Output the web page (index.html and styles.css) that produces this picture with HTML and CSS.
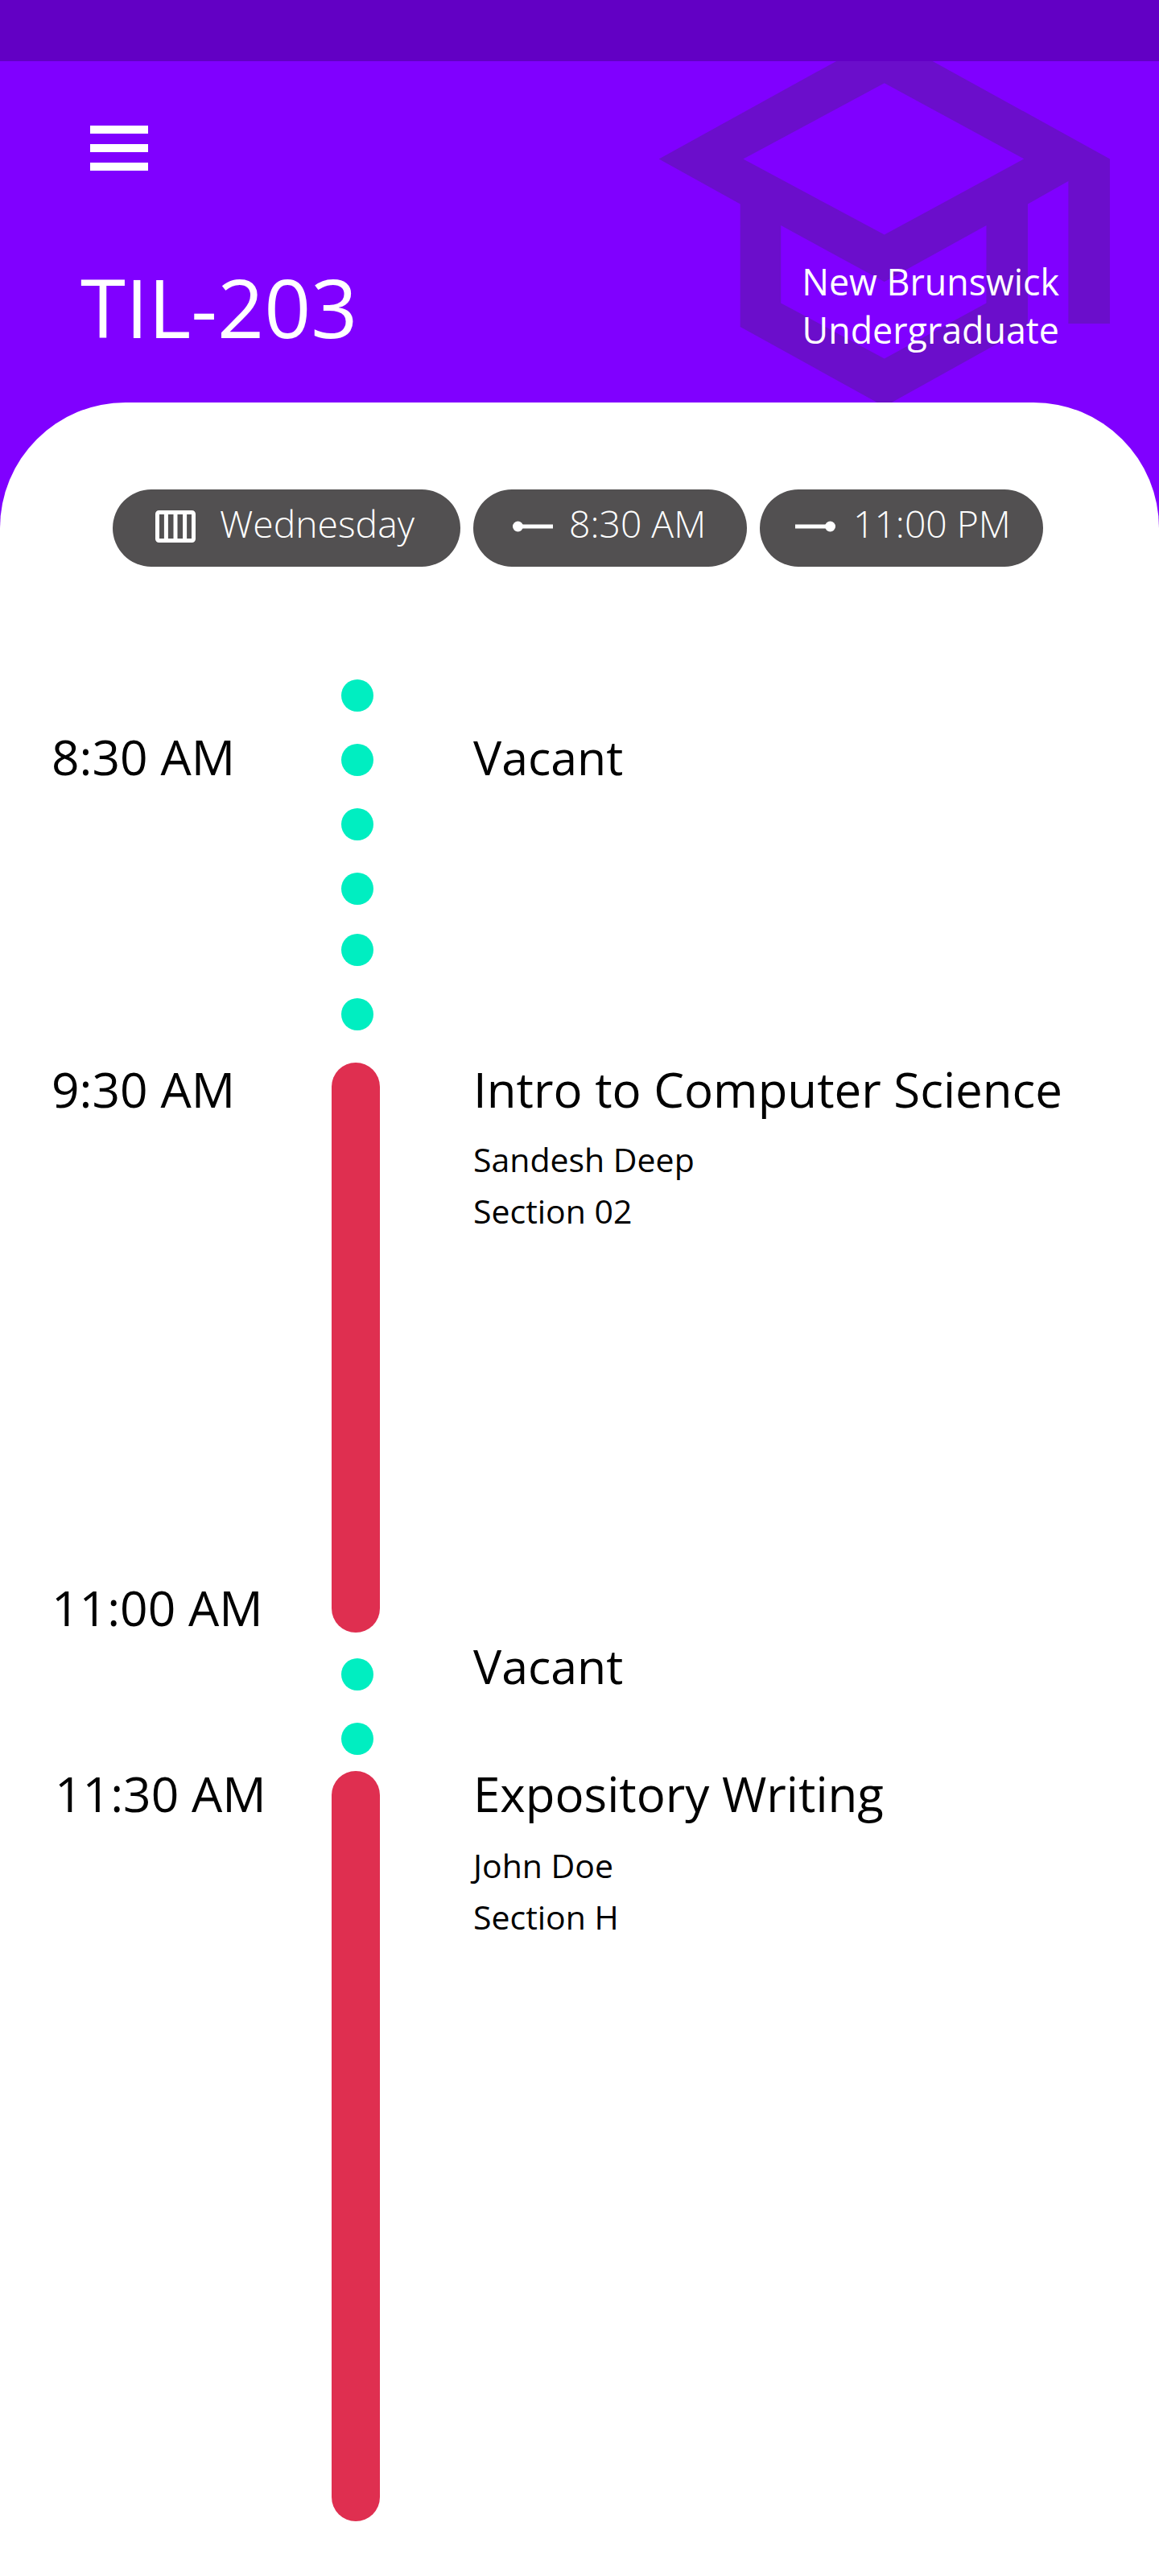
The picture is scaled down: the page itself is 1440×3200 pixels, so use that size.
FILE: index.html
```html
<!DOCTYPE html>
<html lang="en">
<head>
    <meta charset="UTF-8">
    <meta name="viewport" content="width=device-width, initial-scale=1.0">
    <title>TIL-203</title>
    <link rel="stylesheet" href="styles.css">
</head>
<body>
    <div class="page">
        <header class="header">
            <svg class="cap" viewBox="0 0 600 520" aria-hidden="true">
                <path fill-rule="evenodd" d="M18.7 197.4 L298.8 43 L579 197.4 V402 H527.4 V225 L477 253.4 V406 L298.8 505 L119.7 406 V253.4 Z M298.8 103.3 L123.4 197.4 L298.8 291.6 L472.3 197.4 Z M170.2 280 V376.5 L298.8 445.4 L425.5 376.5 V280 L298.8 350 Z"/>
            </svg>
            <div class="status-bar"></div>
            <div class="menu">
                <span></span>
                <span></span>
                <span></span>
            </div>
            <div class="title-row">
                <h1 class="room">TIL-203</h1>
                <p class="campus">New Brunswick<br>Undergraduate</p>
            </div>
        </header>

        <main class="sheet">
            <div class="pills">
                <div class="pill pill-day">
                    <svg class="icon-day" viewBox="0 0 50 40" aria-hidden="true">
                        <rect x="2.5" y="2.5" width="45" height="35" rx="2"/>
                        <path d="M13.4 3V37M25 3V37M36.6 3V37"/>
                    </svg>
                    <span>Wednesday</span>
                </div>
                <div class="pill pill-start">
                    <svg class="icon-range" viewBox="0 0 50 14" aria-hidden="true">
                        <circle cx="6.5" cy="7" r="6.5"/>
                        <rect x="6" y="4.5" width="44" height="5"/>
                    </svg>
                    <span>8:30 AM</span>
                </div>
                <div class="pill pill-end">
                    <svg class="icon-range" viewBox="0 0 50 14" aria-hidden="true">
                        <circle cx="43.5" cy="7" r="6.5"/>
                        <rect x="0" y="4.5" width="44" height="5"/>
                    </svg>
                    <span>11:00 PM</span>
                </div>
            </div>

            <section class="slot slot-first">
                <div class="times times-vacant"><div class="time">8:30 AM</div></div>
                <div class="track">
                    <div class="dot"></div>
                    <div class="dot"></div>
                    <div class="dot"></div>
                    <div class="dot dot-close"></div>
                    <div class="dot"></div>
                    <div class="dot"></div>
                </div>
                <div class="info info-vacant"><div class="name name-vacant">Vacant</div></div>
            </section>

            <section class="slot slot-class-one">
                <div class="times times-class">
                    <div class="time">9:30 AM</div>
                    <div class="time">11:00 AM</div>
                </div>
                <div class="track"><div class="bar"></div></div>
                <div class="info info-class">
                    <div class="name">Intro to Computer Science</div>
                    <div class="detail detail-first">Sandesh Deep</div>
                    <div class="detail">Section 02</div>
                </div>
            </section>

            <section class="slot">
                <div class="times"></div>
                <div class="track track-gap">
                    <div class="dot"></div>
                    <div class="dot dot-last"></div>
                </div>
                <div class="info info-gap"><div class="name name-vacant">Vacant</div></div>
            </section>

            <section class="slot slot-class-two">
                <div class="times times-late"><div class="time">11:30 AM</div></div>
                <div class="track"><div class="bar"></div></div>
                <div class="info info-late">
                    <div class="name">Expository Writing</div>
                    <div class="detail detail-first">John Doe</div>
                    <div class="detail">Section H</div>
                </div>
            </section>
        </main>
    </div>
</body>
</html>
```

FILE: styles.css
```css
* {
    box-sizing: border-box;
}
body {
    margin: 0;
    font-family: "Open Sans", "Noto Sans", sans-serif;
    color: #000;
}
.page {
    display: flex;
    flex-direction: column;
    width: 1440px;
    min-height: 3200px;
    background-color: #8000ff;
}

/* header */
.header {
    position: relative;
    height: 500px;
    overflow: hidden;
    color: #fff;
}
.cap {
    position: absolute;
    top: 0;
    left: 800px;
    width: 600px;
    height: 520px;
    fill: #6b0ecb;
}
.status-bar {
    position: relative;
    height: 76px;
    background-color: #6200c4;
}
.menu {
    position: relative;
    display: flex;
    flex-direction: column;
    gap: 13px;
    width: 72px;
    margin: 80px 0 0 112px;
}
.menu span {
    display: block;
    height: 10px;
    background-color: #fff;
}
.title-row {
    position: relative;
    display: flex;
    justify-content: space-between;
    align-items: flex-start;
    margin-top: 108px;
    padding: 0 124px 0 100px;
}
.room {
    margin: 1px 0 0;
    font-size: 101.6px;
    font-weight: 400;
    line-height: 120px;
}
.campus {
    margin: 0;
    font-size: 44.8px;
    line-height: 60px;
    text-align: right;
}

/* white sheet */
.sheet {
    flex: 1;
    padding-top: 108px;
    background-color: #fff;
    border-radius: 156px 156px 0 0;
}
.pills {
    display: flex;
    gap: 16px;
    margin-left: 140px;
}
.pill {
    display: flex;
    align-items: center;
    height: 96px;
    padding-bottom: 6px;
    border-radius: 48px;
    background-color: #525051;
    color: #fff;
    font-size: 46.3px;
    font-weight: 300;
}
.pill span {
    margin-bottom: 6px;
}
.pill-day {
    width: 432px;
    padding-left: 53px;
    gap: 30px;
}
.pill-start {
    width: 340px;
    padding-left: 49px;
    gap: 20px;
}
.pill-end {
    width: 352px;
    padding-left: 44px;
    gap: 22px;
}
.icon-day {
    width: 50px;
    height: 40px;
    margin-top: 2px;
    fill: none;
    stroke: #fff;
    stroke-width: 5;
}
.icon-range {
    width: 50px;
    height: 14px;
    margin-top: 2px;
    fill: #fff;
}

/* timeline */
.slot {
    display: grid;
    grid-template-columns: 412px 60px 1fr;
}
.slot-first {
    margin-top: 140px;
}
.times {
    padding-left: 64px;
}
.times-vacant {
    padding-top: 66px;
}
.times-class {
    display: flex;
    flex-direction: column;
    justify-content: space-between;
    padding-top: 3px;
    padding-bottom: 1px;
}
.times-late {
    margin-top: -2px;
    padding-left: 68px;
}
.time {
    font-size: 60.5px;
    line-height: 60px;
}
.name {
    font-size: 60px;
    line-height: 60px;
}
.name-vacant {
    font-size: 59px;
}
.track-gap {
    padding-top: 32px;
}
.dot {
    width: 40px;
    height: 40px;
    margin: 0 0 40px 12px;
    border-radius: 50%;
    background-color: #00eec1;
}
.dot-close {
    margin-bottom: 36px;
}
.dot-last {
    margin-bottom: 20px;
}
.bar {
    height: 100%;
    border-radius: 30px;
    background-color: #df2f50;
}
.slot-class-one {
    height: 708px;
}
.slot-class-two {
    height: 932px;
}
.info {
    padding-left: 116px;
}
.info-vacant {
    padding-top: 66px;
}
.info-class {
    padding-top: 3px;
}
.info-gap {
    padding-top: 11px;
}
.info-late {
    margin-top: -2px;
}
.info-late .detail-first {
    margin-top: 27px;
}
.detail {
    font-size: 41px;
    line-height: 64px;
}
.detail-first {
    margin-top: 25px;
}
```
